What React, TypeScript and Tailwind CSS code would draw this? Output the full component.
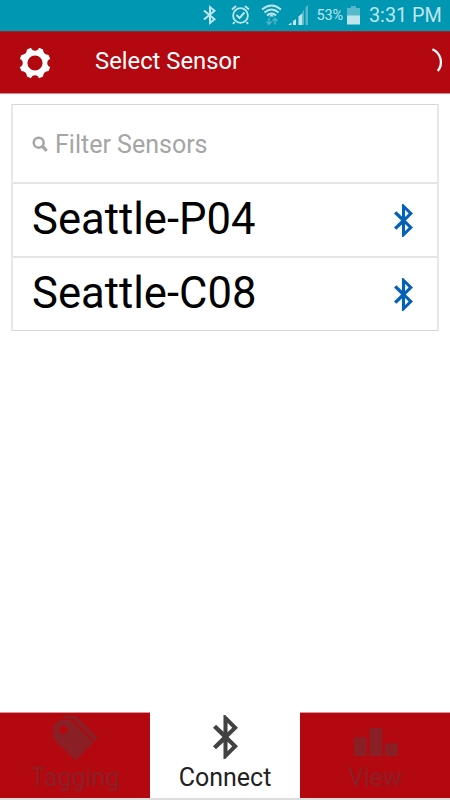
import React from 'react';

function Bluetooth({ className }: { className: string }) {
  return (
    <svg viewBox="0 0 74 132" preserveAspectRatio="none" className={className} fill="currentColor">
      <path
        fillRule="evenodd"
        d="M31 0H36L74 38L46 66L74 94L36 132H31V82L9 103L0 94L28 66L0 38L9 29L31 50ZM43 23V52L57 38ZM43 80V109L57 94Z"
      />
    </svg>
  );
}

function StatusBar() {
  return (
    <div className="flex h-[31px] shrink-0 items-center bg-[#0097b3] text-[#bfe5ec]">
      <svg viewBox="190 0 126 31" className="ml-[190px] h-[31px] w-[126px] shrink-0" fill="none" stroke="currentColor">
        <path d="M204 10.5L214.5 19.3L210 23V7L214.5 10.7L204 19.5" strokeWidth="2" />
        <circle cx="240.5" cy="15.5" r="7.4" strokeWidth="1.8" />
        <path d="M236.5 15L239.5 18L244.5 12.5M232 9.5L236 6M249 9.5L245 6M234.5 22L233 24M246.5 22L248 24" strokeWidth="1.9" />
        <path d="M262 9.5Q271.5 1.5 281 9.5M264.5 12.5Q271.5 6.5 278.5 12.5M267 15.5Q271.5 11.5 276 15.5" strokeWidth="2" />
        <path d="M269 16.5L271.5 14L274 16.5Z" fill="currentColor" stroke="none" />
        <path d="M269 18V24M266.5 21.5L269 24.3L271.5 21.5M275 24.5V18.5M272.5 21L275 18.3L277.5 21" stroke="#4fb4c8" strokeWidth="1.5" />
        <path d="M288 25L291.5 22.5V25ZM293 21L296 19V25H293ZM298.5 16.5L302.5 13V25H298.5Z" fill="currentColor" stroke="none" />
        <path d="M302.5 11.5L304 10V25H302.5ZM305.5 7.5L308 5V25H305.5Z" fill="#58b9cb" stroke="none" />
      </svg>
      <span className="ml-[0.5px] w-[30.5px] whitespace-nowrap pt-px text-[14.5px] tracking-[-0.2px]">53%</span>
      <svg viewBox="0 0 13 20" className="h-5 w-[13px] shrink-0">
        <path d="M4 0H9V2H13V10H0V2H4Z" fill="#58b9cb" />
        <path d="M0 9.5H13V18.5H0Z" fill="currentColor" />
      </svg>
      <span className="ml-[9px] whitespace-nowrap pt-px text-[19.8px]">3:31 PM</span>
    </div>
  );
}

function Header() {
  return (
    <div className="flex h-[63px] shrink-0 items-center border-b border-t border-b-[#c98c8f] border-t-[#a5222b] bg-[#b3080f] text-white">
      <svg viewBox="-16 -16 32 32" className="ml-[19px] h-8 w-8 shrink-0" fill="none" stroke="none">
        <path
          fill="currentColor"
          fillRule="evenodd"
          d="M15.2 4L13.6 8A6 6 0 0 0 8 13.6L4 15.2A4.2 4.2 0 0 0 -4 15.2L-8 13.6A6 6 0 0 0 -13.6 8L-15.2 4A4.2 4.2 0 0 0 -15.2 -4L-13.6 -8A6 6 0 0 0 -8 -13.6L-4 -15.2A4.2 4.2 0 0 0 4 -15.2L8 -13.6A6 6 0 0 0 13.6 -8L15.2 -4A4.2 4.2 0 0 0 15.2 4ZM7.6 0A7.6 7.6 0 1 0 -7.6 0A7.6 7.6 0 1 0 7.6 0Z"
        />
      </svg>
      <h1 className="ml-11 whitespace-nowrap pb-px text-[23.8px]">Select Sensor</h1>
      <svg viewBox="430 46 14 26" className="ml-auto mr-1.5 mt-[-5px] h-[26px] w-[14px]" fill="none">
        <path d="M432.4 48.2A14 14 0 0 1 437.7 70" stroke="currentColor" strokeWidth="2.3" />
      </svg>
    </div>
  );
}

function SensorRow({ name }: { name: string }) {
  return (
    <li className="flex h-[74px] items-center justify-between border-t-2 border-[#e5e5e5] pl-[19px] pr-[24px]">
      <span className="text-[43.6px] leading-[70px]">{name}</span>
      <Bluetooth className="h-[33px] w-[19px] text-[#0560b8]" />
    </li>
  );
}

export default function App() {
  return (
    <div className="flex h-[800px] w-[450px] flex-col overflow-hidden bg-white font-[Roboto,sans-serif] text-black">
      <StatusBar />
      <Header />
      <main className="flex-1 px-[11px] pt-[10px]">
        <div className="w-[428px] border-x-2 border-y border-x-[#e8e8e8] border-y-[#d6d6d6]">
          <div className="flex h-[77px] items-center pl-[19px] text-[#a5a5a5]">
            <svg viewBox="0 0 16 16" className="h-4 w-4" fill="none" stroke="currentColor">
              <circle cx="6.7" cy="6.7" r="5" strokeWidth="2.5" />
              <path d="M10.4 10.4L13.8 13.8" strokeWidth="3.2" strokeLinecap="round" />
            </svg>
            <span className="ml-[7px] pt-[3px] text-[25px]">Filter Sensors</span>
          </div>
          <ul>
            <SensorRow name="Seattle-P04" />
            <SensorRow name="Seattle-C08" />
          </ul>
        </div>
      </main>
      <nav className="grid h-[88px] shrink-0 grid-cols-3 border-b-2 border-[#dddddd] text-center text-[25px] leading-[30px]">
        <div className="flex flex-col items-center border-t border-[#d9959a] bg-[#b3080f] text-[#8a1f26]">
          <svg viewBox="159 45 134 137" className="mt-[2px] h-[46px] w-[45px]" fill="currentColor">
            <path
              fillRule="evenodd"
              d="M160 80Q160 76 163 73L178 61Q181 59 186 59H207Q212 59 216 63L280 126L227 180L163 119Q160 116 160 111ZM203 89A13 13 0 1 0 177 89A13 13 0 1 0 203 89Z"
            />
            <path d="M186 54L195 47H223Q227 47 230 50L292 113L284 124L277 117L222 60Q219 57 215 56Z" />
          </svg>
          <span className="mt-[2px]">Tagging</span>
        </div>
        <div className="flex flex-col items-center text-[#222222]">
          <Bluetooth className="mt-[3px] h-11 w-[25px] text-[#424242]" />
          <span className="mt-[4px] text-[25px]">Connect</span>
        </div>
        <div className="flex flex-col items-center border-t border-[#d9959a] bg-[#b3080f] text-[#8a1f26]">
          <svg viewBox="0 0 132 84" className="ml-[1px] mt-[15px] h-7 w-11" fill="currentColor">
            <path d="M0 28H38V84H0ZM46 0H85V84H46ZM93 46H132V84H93Z" />
          </svg>
          <span className="mt-[7px]">View</span>
        </div>
      </nav>
    </div>
  );
}
